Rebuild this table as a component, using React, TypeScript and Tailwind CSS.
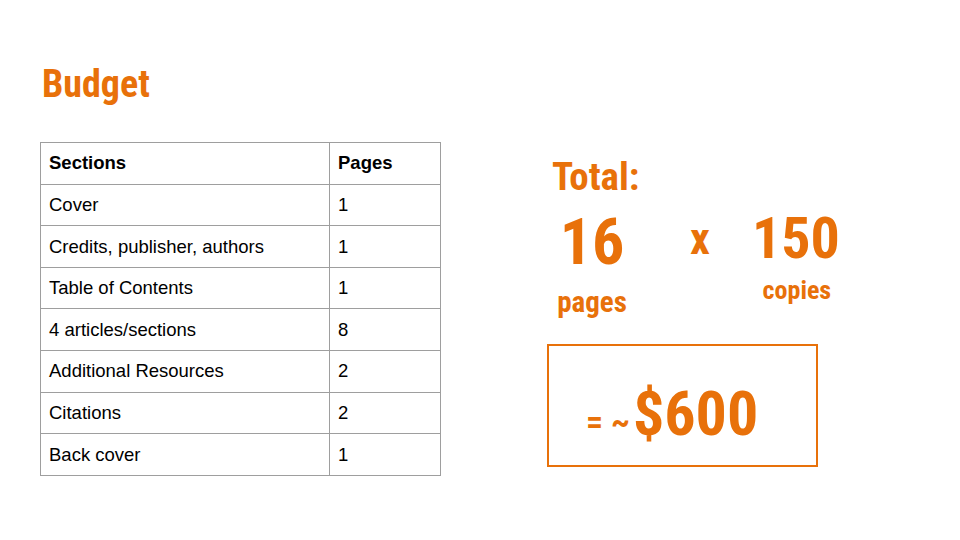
const rows: [string, string][] = [
  ['Cover', '1'],
  ['Credits, publisher, authors', '1'],
  ['Table of Contents', '1'],
  ['4 articles/sections', '8'],
  ['Additional Resources', '2'],
  ['Citations', '2'],
  ['Back cover', '1'],
];

const narrow = "font-['Liberation_Sans_Narrow','Roboto_Condensed','Open_Sans',sans-serif] [font-stretch:condensed] font-bold text-[#e8710a]";

export default function App() {
  return (
    <div className="w-[960px] h-[540px] bg-white overflow-hidden relative">
      <h1 className={`${narrow} text-[38px] leading-none pl-[42px] pt-[65px]`}>Budget</h1>

      <div className="flex pl-[40px] pt-[39px]">
        {/* table */}
        <table className="border-collapse font-['Liberation_Sans',Arial,sans-serif] text-[18.5px] text-black">
          <tbody>
            <tr className="h-[41.6px]">
              <td className="w-[289px] border border-[#9e9e9e] pl-[8px] font-bold">Sections</td>
              <td className="w-[111px] border border-[#9e9e9e] pl-[8px] font-bold">Pages</td>
            </tr>
            {rows.map(([s, p]) => (
              <tr key={s} className="h-[41.6px]">
                <td className="border border-[#9e9e9e] pl-[8px]">{s}</td>
                <td className="border border-[#9e9e9e] pl-[8px]">{p}</td>
              </tr>
            ))}
          </tbody>
        </table>

        {/* totals */}
        <div className="ml-[106px] flex flex-col">
          <div className={`${narrow} text-[39px] leading-none pl-[5px] pt-[16px]`}>Total:</div>
          <div className="flex items-start">
            <div className="flex flex-col items-center w-[90px]">
              <span className={`${narrow} text-[64px] leading-none pt-[14px]`}>16</span>
              <span className={`${narrow} text-[29px] leading-none pt-[13px]`}>pages</span>
            </div>
            <span className={`${narrow} text-[44px] leading-none ml-[53px] pt-[20px]`}>x</span>
            <div className="flex flex-col items-center ml-[39px] w-[94px]">
              <span className={`${narrow} text-[58px] leading-none pt-[12px]`}>150</span>
              <span className={`${narrow} text-[26px] leading-none pt-[10px] pl-[2px]`}>copies</span>
            </div>
          </div>
          <div className="mt-[27px] w-[271px] h-[123px] border-2 border-[#e8710a] flex items-center pl-[37px] pt-[16px]">
            <span className={`${narrow} text-[34px] leading-none mt-[14px] mr-[3px]`}>= ~</span>
            <span className={`${narrow} text-[62px] leading-none`}>$600</span>
          </div>
        </div>
      </div>
    </div>
  );
}
